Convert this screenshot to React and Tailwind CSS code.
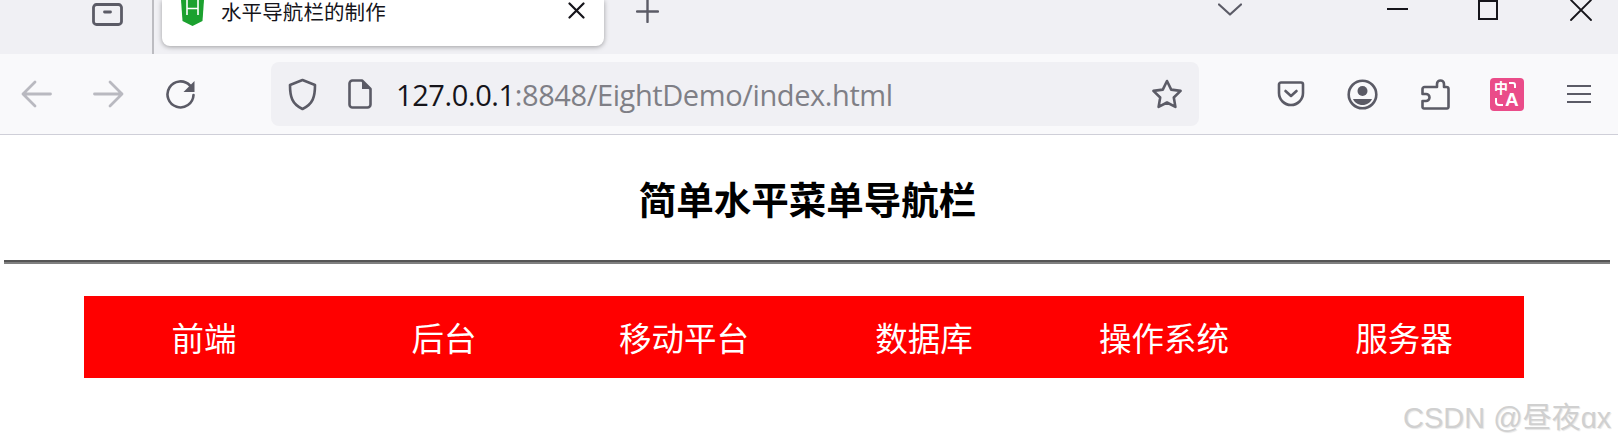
import React from 'react';

const cjk = "font-['Noto_Sans_CJK_SC',sans-serif]";
const navItems = ['前端', '后台', '移动平台', '数据库', '操作系统', '服务器'];

const Stroke = ({ w, h, vb, className = '', sw = 2.2, color = '#5b5b66', children }) => (
  <svg
    width={w}
    height={h}
    viewBox={vb || `0 0 ${w} ${h}`}
    fill="none"
    stroke={color}
    strokeWidth={sw}
    strokeLinecap="round"
    strokeLinejoin="round"
    className={`shrink-0 ${className}`}
  >
    {children}
  </svg>
);

const TabBar = () => (
  <div className="flex h-[54px] bg-[#f0f0f4] items-start overflow-hidden">
    {/* tab manager */}
    <Stroke w={31} h={23} sw={2.8} className="ml-[92px] mt-[3px]">
      <rect x="1.5" y="1.5" width="28" height="20" rx="3" />
      <path d="M12.5 9h6" />
    </Stroke>
    <div className="ml-[29px] w-[2px] h-[54px] bg-[#bcbcc1]" />
    {/* active tab */}
    <div className="ml-[8px] w-[442px] h-[46px] bg-white rounded-b-[8px] shadow-[0_1px_5px_rgba(0,0,0,0.35)] flex items-start shrink-0 relative">
      <svg width="23" height="26" viewBox="0 0 23 26" className="ml-[19px] shrink-0">
        <path d="M0 0h23l-1.500 21L11.500 26 1.500 21z" fill="#1ba12f" />
        <path d="M6 0v15M17 0v15M6 8.500h11" stroke="#fff" strokeWidth="1.600" fill="none" />
      </svg>
      <span className={`ml-[17px] mt-[1px] text-[20.5px] leading-[20px] tracking-[0.1px] whitespace-nowrap text-[#15141a] ${cjk}`}>水平导航栏的制作</span>
      <Stroke w={17} h={17} color="#15141a" sw={2.2} className="ml-[182px] mt-[2px]">
        <path d="M1.500 1.500l14 14M15.500 1.500l-14 14" />
      </Stroke>
    </div>
    <Stroke w={23} h={23} sw={2.4} className="ml-[32px]">
      <path d="M11.500 0v22M1 11.500h21" />
    </Stroke>
    <Stroke w={24} h={13} sw={2.2} className="ml-[559px] mt-[3px]">
      <path d="M1 1.500l11 10 11-10" />
    </Stroke>
    <div className="ml-[145px] mt-[8px] w-[21px] h-[2px] bg-[#15141a] shrink-0" />
    <div className="ml-[70px] w-[20px] h-[20px] border-2 border-[#15141a] shrink-0" />
    <Stroke w={22} h={21} color="#15141a" sw={1.8} className="ml-[72px]">
      <path d="M1 0l20 20M21 0L1 20" />
    </Stroke>
  </div>
);

const Toolbar = () => (
  <div className="flex items-center h-[81px] bg-[#f9f9fb] border-b border-[#cfcfd8]">
    {/* back / forward / reload */}
    <Stroke w={31} h={28} sw={2.8} color="#b9b9c0" className="ml-[21px]">
      <path d="M29.500 14H2M14 2L2 14l12 12" />
    </Stroke>
    <Stroke w={31} h={28} sw={2.8} color="#b9b9c0" className="ml-[41px]">
      <path d="M1.500 14H29M17 2l12 12-12 12" />
    </Stroke>
    <svg width="31" height="31" viewBox="0 0 31 31" fill="none" className="ml-[41px] shrink-0">
      <path d="M25 6.500A13 13 0 1 0 28.500 16" stroke="#5b5b66" strokeWidth="2.600" strokeLinecap="round" />
      <path d="M29.500 2v11h-11z" fill="#5b5b66" />
    </svg>
    {/* url bar */}
    <div className="ml-[75px] w-[928px] h-[64px] bg-[#f0f0f4] rounded-[8px] flex items-center shrink-0">
      <Stroke w={29} h={33} sw={2.6} className="ml-[17px]">
        <path d="M14.500 2L27 7c0 12-2 19-12.500 24C4 26 2 19 2 7z" />
      </Stroke>
      <svg width="24" height="30" viewBox="0 0 24 30" fill="none" className="ml-[31px] shrink-0">
        <path d="M4 1.500h10L22.500 10v15.500a3 3 0 0 1-3 3h-15a3 3 0 0 1-3-3v-21a3 3 0 0 1 3-3z" stroke="#5b5b66" strokeWidth="2.600" strokeLinejoin="round" />
        <path d="M14 1.500V10h8.500z" fill="#5b5b66" />
      </svg>
      <span className="ml-[24px] text-[29px] leading-none font-['Open_Sans',sans-serif] tracking-[-0.4px] whitespace-nowrap w-[755px]">
        <span className="text-[#15141a]">127.0.0.1</span>
        <span className="text-[#7f7f86]">:8848/EightDemo/index.html</span>
      </span>
      <Stroke w={32} h={30} sw={2.6}>
        <path d="M16 2l4.200 8.600 9.400 1.300-6.800 6.600 1.600 9.400-8.400-4.400-8.400 4.400 1.600-9.400L2.400 11.900l9.400-1.300z" />
      </Stroke>
    </div>
    {/* right side icons */}
    <svg width="28" height="26" viewBox="0 0 27 26" fill="none" stroke="#5b5b66" strokeWidth="2.600" strokeLinecap="round" strokeLinejoin="round" className="ml-[78px] shrink-0">
      <path d="M3.500 1.500h20a2 2 0 0 1 2 2V12a12 12 0 0 1-24 0V3.500a2 2 0 0 1 2-2z" />
      <path d="M8 10l5.500 5L19 10" />
    </svg>
    <svg width="31" height="31" viewBox="0 0 31 31" fill="none" className="ml-[42px] shrink-0">
      <circle cx="15.500" cy="15.500" r="13.800" stroke="#5b5b66" strokeWidth="2.600" />
      <circle cx="15.500" cy="12" r="5" fill="#5b5b66" />
      <path d="M6 20h19c-1.500 3.500-5 6-9.500 6S7.500 23.500 6 20z" fill="#5b5b66" />
    </svg>
    <Stroke w={29} h={31} sw={2.6} className="ml-[43px]">
      <path d="M11 8h5V5a3.500 3.500 0 0 1 7 0v3h2.500A2 2 0 0 1 27.500 10v18a1.500 1.500 0 0 1-1.500 1.500H3A1.500 1.500 0 0 1 1.500 28v-6H5a3.500 3.500 0 0 0 0-7H1.500v-5A2 2 0 0 1 3.500 8z" />
    </Stroke>
    <div className="ml-[40px] w-[34px] h-[33px] rounded-[4px] bg-[#ea4c89] relative shrink-0 overflow-hidden">
      <span className={`absolute left-[4px] top-[1px] text-[14px] leading-[16px] font-bold text-white ${cjk}`}>中</span>
      <span className="absolute left-[15px] top-[12px] text-[19px] leading-[20px] font-bold text-white font-['Liberation_Sans',sans-serif]">A</span>
      <svg width="34" height="33" viewBox="0 0 34 33" fill="none" stroke="#fff" strokeWidth="2" className="absolute inset-0">
        <path d="M19 5h4a2 2 0 0 1 2 2v3M6 20v4a3 3 0 0 0 3 3h4" />
      </svg>
    </div>
    <div className="ml-[43px] w-[24px] flex flex-col gap-[6px] shrink-0">
      <div className="h-[2px] bg-[#5b5b66]" />
      <div className="h-[2px] bg-[#5b5b66]" />
      <div className="h-[2px] bg-[#5b5b66]" />
    </div>
  </div>
);

export default function App() {
  return (
    <div className="relative w-[1618px] h-[446px] overflow-hidden bg-white">
      <TabBar />
      <Toolbar />
      <div className="bg-white">
        <h1 className={`h-[125px] pt-[2px] pr-[3px] flex items-center justify-center text-[37.5px] font-bold text-black ${cjk}`}>
          简单水平菜单导航栏
        </h1>
        <hr className="mx-[4px] w-[1606px] h-[4px] border-t-2 border-b-2 border-t-[#555555] border-b-[#808080]" />
        <ul className="mt-[32px] ml-[84px] w-[1440px] h-[82px] bg-[#ff0000] flex">
          {navItems.map((item) => (
            <li key={item} className={`w-[240px] flex items-center justify-center text-white text-[32.5px] ${cjk}`}>
              {item}
            </li>
          ))}
        </ul>
      </div>
      {/* watermark */}
      <div className="absolute left-[1403px] top-[400px] w-[209px] overflow-hidden text-[29px] leading-[36px] text-[#d0d0d0] whitespace-nowrap font-['Liberation_Sans','Noto_Sans_CJK_SC',sans-serif] [text-shadow:1px_1px_1px_#e6e6e6]">
        CSDN @昼夜ɑx
      </div>
    </div>
  );
}
